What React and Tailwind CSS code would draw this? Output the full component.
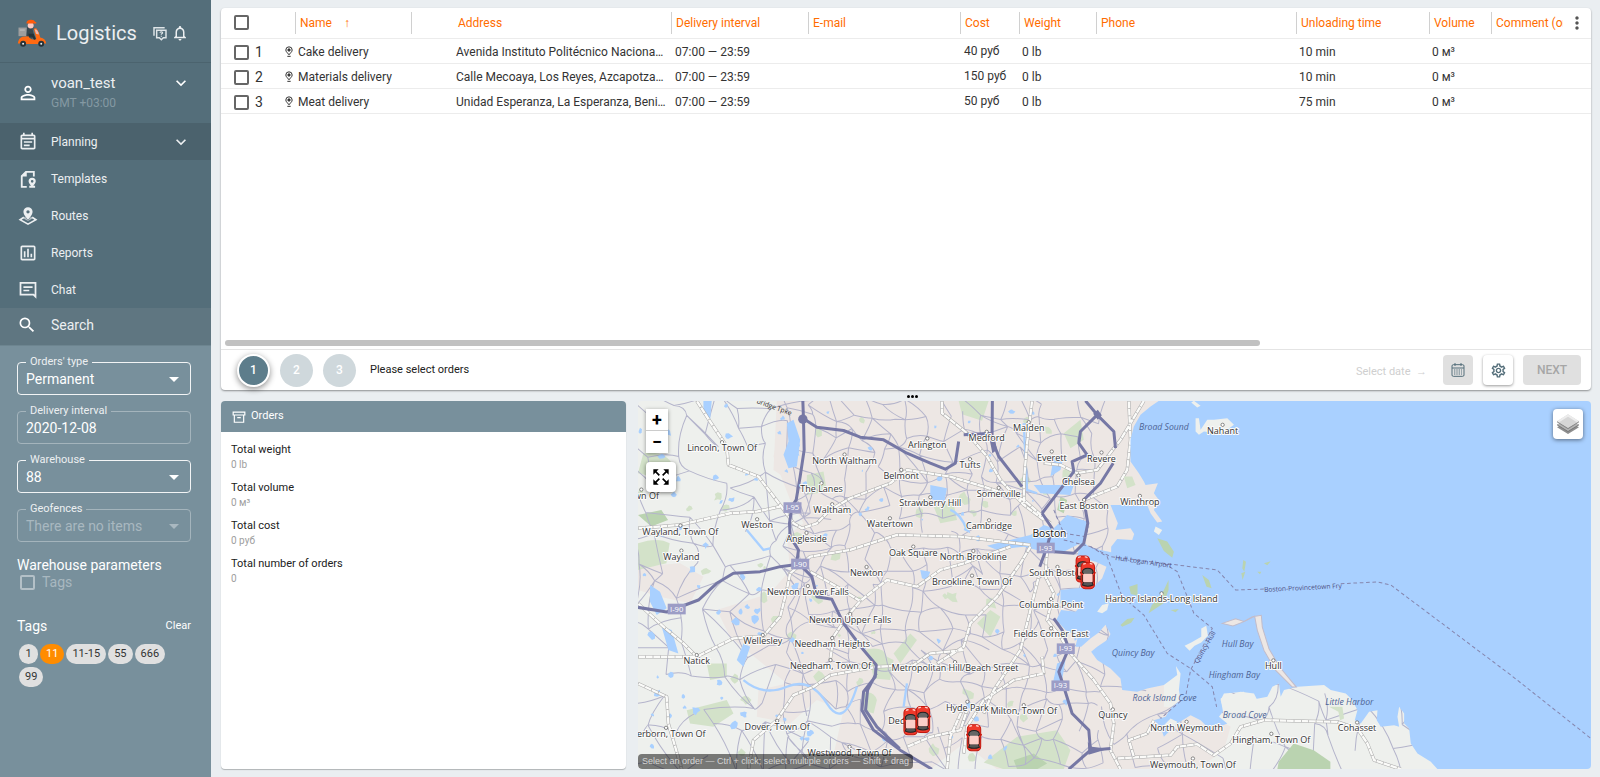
import React from "react";
import {
  MdPersonOutline,
  MdOutlineEventNote,
  MdOutlineAssessment,
  MdSearch,
  MdNotificationsNone,
  MdExpandMore,
  MdArrowDropDown,
  MdMoreVert,
  MdOutlineSettings,
} from "react-icons/md";

/* ---------- icons ---------- */

function ScooterLogo() {
  return (
    <svg viewBox="50 55 90 85" className="h-7 w-[30px] shrink-0" aria-hidden="true">
      <rect x="54" y="81" width="25" height="26" fill="#9e9e9e" />
      <rect x="58" y="87" width="15" height="3" fill="#c4c4c4" />
      <path d="M80 80q10-3 16 3l4 17-4 14H82l-4-10z" fill="#37474f" />
      <path d="M84 100h16l8 18-5 3-8-12H86z" fill="#263238" />
      <path d="M94 83l14 11 3-4-12-11z" fill="#455a64" />
      <circle cx="91" cy="75" r="9" fill="#ffc9c0" />
      <path d="M78 69q0-12 14-12 10 0 13 7l3 1v4H92q-8 0-14 0z" fill="#ff5a0a" />
      <path d="M100 84l8-1 4 6q6 8 8 22 17 3 18 18h-12q-4-6-9-1l-3 3H78l-4-5q-5-5-10 0l-2 3H52q2-16 14-20l18-2 4 6q6 6 16 5l4-3z" fill="#ff6a13" />
      <path d="M103 86q10 0 13 16l-9-2z" fill="#e8b7b0" />
      <circle cx="68" cy="130" r="9" fill="#263238" />
      <circle cx="68" cy="130" r="3" fill="#eceff1" />
      <circle cx="123" cy="130" r="9" fill="#263238" />
      <circle cx="123" cy="130" r="3" fill="#eceff1" />
    </svg>
  );
}

function HelpChatIcon() {
  return (
    <svg viewBox="0 0 24 24" className="size-4" fill="none" stroke="currentColor" strokeWidth="2.200" aria-hidden="true">
      <path d="M3 16V4h16" />
      <path d="M7 8h14v11h-4l-3 3-3-3H7z" />
      <path d="M12 11.800q0-1.500 2-1.500t2 1.500q0 1-2 1.800v1.200" strokeWidth="1.700" />
      <path d="M14 16v1.500" strokeWidth="1.700" />
    </svg>
  );
}

function TemplatesIcon() {
  return (
    <svg viewBox="0 0 24 24" className="size-5" aria-hidden="true">
      <path d="M10.500 21.500H4.500V8.500l5-5H19v5.500" fill="none" stroke="currentColor" strokeWidth="2.200" />
      <path d="M3.500 9l7-6.500V9z" fill="currentColor" />
      <path fill="currentColor" fillRule="evenodd" d="M17 10.500a4.300 4.300 0 0 1 4.300 4.300c0 2.300-2 3.700-2.900 5.200h2.100v2.500h-7V20h2.100c-.9-1.500-2.900-2.900-2.900-5.200A4.300 4.300 0 0 1 17 10.500zm0 2.700a1.600 1.600 0 1 0 0 3.200 1.600 1.600 0 0 0 0-3.200z" />
    </svg>
  );
}

function RoutesIcon() {
  return (
    <svg viewBox="0 0 24 24" className="size-5" aria-hidden="true">
      <path fill="currentColor" fillRule="evenodd" d="M12 1.500a5.500 5.500 0 0 1 5.500 5.500c0 4-5.500 9.500-5.500 9.500S6.500 11 6.500 7A5.500 5.500 0 0 1 12 1.500zm0 3.500a2 2 0 1 0 0 4 2 2 0 0 0 0-4z" />
      <path d="M7 13.500L2.500 16.500 12 21.700l9.500-5.200L17 13.500" fill="none" stroke="currentColor" strokeWidth="1.900" />
      <path d="M5.500 14.500L12 18l6.500-3.500-3-1.500-3.500 4.500-3.500-4.500z" fill="currentColor" opacity=".6" />
    </svg>
  );
}

function ChatIcon() {
  return (
    <svg viewBox="0 0 24 24" className="size-5" fill="none" stroke="currentColor" strokeWidth="2.100" aria-hidden="true">
      <path d="M3 3.500h18V20l-2.500-2.500H3z" />
      <path d="M6.500 8.500h11M6.500 12.500h7" strokeWidth="1.900" />
    </svg>
  );
}

function PinIcon() {
  return (
    <svg viewBox="0 0 24 36" className="h-3 w-2 shrink-0" fill="none" stroke="#333" strokeWidth="3" aria-hidden="true">
      <path d="M12 2.500a9.500 9.500 0 0 1 9.500 9.500c0 6-6 8-7.500 13h-4C8.500 20 2.500 18 2.500 12A9.500 9.500 0 0 1 12 2.500z" />
      <circle cx="12" cy="12" r="3.500" fill="#333" />
      <path d="M7 31h10" />
    </svg>
  );
}

function ArchiveIcon() {
  return (
    <svg viewBox="0 0 24 24" className="size-[14px]" fill="none" stroke="currentColor" strokeWidth="2" aria-hidden="true">
      <path d="M2 3.500h20v5H2z" />
      <path d="M4 8.500V21h16V8.500M9 13h6" />
    </svg>
  );
}

function CalendarIcon() {
  return (
    <svg viewBox="0 0 42 42" className="size-[14px]" fill="none" stroke="#546e7a" strokeWidth="3" aria-hidden="true">
      <rect x="3" y="5" width="36" height="35" rx="4" />
      <path d="M3 15h36M12 0v9M30 0v9" />
      <path d="M9 21h24M9 27h24M9 33h24" strokeDasharray="4 3" />
    </svg>
  );
}

function ExpandIcon() {
  return (
    <svg viewBox="0 0 48 48" className="size-4" aria-hidden="true">
      <path d="M5 5l14 14M43 5L29 19M5 43l14-14M43 43L29 29" fill="none" stroke="#000" strokeWidth="5" />
      <path d="M1 1h16L1 17zM47 1v16L31 1zM1 47V31l16 16zM47 47H31l16-16z" />
    </svg>
  );
}

function LayersIcon() {
  return (
    <svg viewBox="0 0 66 66" className="size-[22px]" aria-hidden="true">
      <path d="M0 43l33 20 33-20-8-5-25 15L8 38z" fill="#8f8f8f" />
      <path d="M0 35l33 20 33-20-8-5-25 15L8 30z" fill="#b5b5b5" />
      <path d="M0 34l33 20 33-20v3L33 57 0 37z" fill="#777" />
      <path d="M0 25l33 20 33-20L33 4z" fill="#d6d6d6" />
      <path d="M0 25L33 4l33 21-6 3-27-17L6 28z" fill="#ececec" />
      <path d="M0 25l33 20 33-20v3L33 49 0 28z" fill="#888" />
    </svg>
  );
}

/* ---------- sidebar ---------- */

const NAV = [
  { label: "Planning", icon: <MdOutlineEventNote className="size-5" />, active: true },
  { label: "Templates", icon: <TemplatesIcon /> },
  { label: "Routes", icon: <RoutesIcon /> },
  { label: "Reports", icon: <MdOutlineAssessment className="size-5" /> },
  { label: "Chat", icon: <ChatIcon /> },
];

function SelectField({ id, label, value, disabled }) {
  return (
    <fieldset
      className={
        "min-w-0 rounded border px-2 " +
        (disabled ? "border-[#a4b4bc] text-[#a9b8c0]" : "border-white/90 text-white")
      }
    >
      <legend className="px-1 text-[11px] leading-3 text-[#eceff1]">
        <label htmlFor={id}>{label}</label>
      </legend>
      <div className="mb-[5px] flex h-[21px] items-center">
        <select
          id={id}
          disabled={disabled}
          className="min-w-0 flex-1 appearance-none bg-transparent text-sm disabled:opacity-100"
        >
          <option>{value}</option>
        </select>
        <MdArrowDropDown className="pointer-events-none -mr-1 size-6 shrink-0" />
      </div>
    </fieldset>
  );
}

function Sidebar() {
  const tags = ["1", "11", "11-15", "55", "666", "99"];
  return (
    <aside className="flex w-[211px] shrink-0 flex-col bg-[#78909c] text-white">
      <div className="bg-[#546e7a]">
        <header className="flex h-[62px] items-center pl-[17px] pr-[22px] pt-[3px]">
          <ScooterLogo />
          <h1 className="ml-[9px] flex-1 text-xl text-[#eceff1]">Logistics</h1>
          <button aria-label="Help" className="text-[#dfe5e8]"><HelpChatIcon /></button>
          <button aria-label="Notifications" className="ml-[3px] text-[#eceff1]">
            <MdNotificationsNone className="size-[18px]" />
          </button>
        </header>
        <div className="flex h-[61px] items-center border-t border-[#4b636e] pl-[17px] pr-5">
          <MdPersonOutline className="size-[22px]" />
          <div className="ml-3 flex-1">
            <p className="text-[15px] leading-5 text-[#eceff1]">voan_test</p>
            <p className="text-xs leading-5 text-[#8499a3]">GMT +03:00</p>
          </div>
          <button aria-label="Account menu" className="mb-5"><MdExpandMore className="size-5" /></button>
        </div>
        <nav>
          {NAV.map((n) => (
            <a
              key={n.label}
              href="#"
              className={
                "flex h-[37px] items-center pl-[18px] pr-5 text-xs text-[#eceff1] " + (n.active ? "bg-[#4b626d]" : "")
              }
            >
              {n.icon}
              <span className="ml-[13px] flex-1">{n.label}</span>
              {n.active && <MdExpandMore className="size-5" />}
            </a>
          ))}
        </nav>
        <div className="flex h-[37px] items-center bg-[#5f7681] pb-[3px] pl-[17px] pr-5">
          <label htmlFor="search" aria-label="Search"><MdSearch className="size-5" /></label>
          <input
            id="search"
            placeholder="Search"
            className="ml-[14px] min-w-0 flex-1 bg-transparent text-sm outline-none placeholder:text-[#eceff1]"
          />
        </div>
      </div>

      <div className="flex flex-col gap-[10px] border-t border-[#6d8590] px-[17px] pr-5 pt-[10px]">
        <SelectField id="otype" label="Orders' type" value="Permanent" />
        <fieldset className="min-w-0 rounded border border-[#a4b4bc] px-2">
          <legend className="px-1 text-[11px] leading-3 text-[#eceff1]">
            <label htmlFor="interval">Delivery interval</label>
          </legend>
          <input
            id="interval"
            defaultValue="2020-12-08"
            className="mb-[5px] block h-[21px] w-full bg-transparent text-sm outline-none"
          />
        </fieldset>
        <SelectField id="warehouse" label="Warehouse" value="88" />
        <SelectField id="geo" label="Geofences" value="There are no items" disabled />
      </div>

      <div className="px-[17px] pr-5 pt-[14px]">
        <h2 className="text-sm leading-[18px]">Warehouse parameters</h2>
        <label className="ml-[3px] flex items-center gap-[7px] text-sm leading-4 text-[#a9b8c0]">
          <input type="checkbox" disabled className="size-[15px] appearance-none rounded-[2px] border-2 border-[#b3c0c7]" />
          Tags
        </label>
        <div className="mt-[26px] flex items-center justify-between">
          <h2 className="text-sm">Tags</h2>
          <button className="text-[11px]">Clear</button>
        </div>
        <div className="mt-2 flex flex-wrap gap-x-[2px] gap-y-[3px] pl-[2px]">
          {tags.map((t) => (
            <button
              key={t}
              className={
                "h-5 min-w-[19px] rounded-full px-[6px] text-[11px] " +
                (t === "11" ? "bg-[#ff8c00] text-white" : "bg-[#e0e0e0] text-[#333]")
              }
            >
              {t}
            </button>
          ))}
        </div>
      </div>
    </aside>
  );
}

/* ---------- orders table ---------- */

const ROWS = [
  { n: 1, name: "Cake delivery", address: "Avenida Instituto Politécnico Nacional, México", cost: "40 руб", time: "10 min" },
  { n: 2, name: "Materials delivery", address: "Calle Mecoaya, Los Reyes, Azcapotzalco", cost: "150 руб", time: "10 min" },
  { n: 3, name: "Meat delivery", address: "Unidad Esperanza, La Esperanza, Benito Juárez", cost: "50 руб", time: "75 min" },
];

const BOX = "block size-[15px] appearance-none rounded-[2px] border-2 border-[#666]";

function Th({ children, pad }) {
  return (
    <th className="p-0 text-left font-normal">
      <div className={"flex h-[22px] items-center overflow-hidden whitespace-nowrap border-l border-[#d0d0d0] " + (pad || "pl-1")}>
        {children}
      </div>
    </th>
  );
}

function OrdersTable() {
  return (
    <table className="w-full table-fixed border-collapse text-xs text-[#333]">
      <colgroup>
        <col className="w-[32px]" />
        <col className="w-[28px]" />
        <col className="w-[130px]" />
        <col className="w-[260px]" />
        <col className="w-[137px]" />
        <col className="w-[152px]" />
        <col className="w-[59px]" />
        <col className="w-[77px]" />
        <col className="w-[200px]" />
        <col className="w-[133px]" />
        <col className="w-[62px]" />
        <col />
        <col className="w-[28px]" />
      </colgroup>
      <thead>
        <tr className="h-[30px] border-b border-[#ececec] text-[#ff6d00]">
          <th className="p-0 pl-[13px]"><input type="checkbox" aria-label="Select all" className={BOX} /></th>
          <th />
          <th className="p-0 pl-[14px] text-left font-normal">
            <div className="flex h-[22px] items-center gap-3 border-l border-[#d0d0d0] pl-1">
              Name <span>↑</span>
            </div>
          </th>
          <Th pad="pl-[46px]">Address</Th>
          <Th>Delivery interval</Th>
          <Th>E-mail</Th>
          <Th>Cost</Th>
          <Th>Weight</Th>
          <Th>Phone</Th>
          <Th>Unloading time</Th>
          <Th>Volume</Th>
          <Th>Comment (order)</Th>
          <th className="p-0">
            <button aria-label="Columns" className="flex w-full justify-center text-[#555]"><MdMoreVert className="size-5" /></button>
          </th>
        </tr>
      </thead>
      <tbody>
        {ROWS.map((r) => (
          <tr key={r.n} className="h-[25px] border-b border-[#ececec]">
            <td className="p-0 pl-[13px] pt-[3px]"><input type="checkbox" aria-label={r.name} className={BOX} /></td>
            <td className="p-0 pl-[2px] pt-[2px] text-sm leading-4">{r.n}</td>
            <td className="p-0 pl-1 pt-[3px]">
              <div className="flex items-center gap-[5px] whitespace-nowrap"><PinIcon />{r.name}</div>
            </td>
            <td className="truncate p-0 pl-[45px] pr-[5px] pt-[2px]">{r.address}</td>
            <td className="p-0 pl-1 pt-[2px]">07:00 — 23:59</td>
            <td />
            <td className="whitespace-nowrap p-0 pl-1">{r.cost}</td>
            <td className="p-0 pl-[3px] pt-[3px]">0 lb</td>
            <td />
            <td className="p-0 pl-[3px] pt-[2px]">{r.time}</td>
            <td className="p-0 pl-[3px] pt-[3px]">0 м³</td>
            <td />
            <td />
          </tr>
        ))}
      </tbody>
    </table>
  );
}

function OrdersCard() {
  return (
    <section className="flex flex-[382] basis-0 flex-col rounded bg-white shadow-[0_1px_2px_rgba(0,0,0,0.4)]">
      <OrdersTable />
      <div className="flex-1" />
      <div className="mb-[3px] px-1"><div className="h-[6px] w-[76%] rounded-full bg-[#c1c1c1]" /></div>
      <footer className="flex h-[41px] items-center border-t border-[#e4e4e4] pl-4 pr-[10px]">
        <ol className="flex items-center gap-[10px] text-center text-xs font-medium text-white">
          <li className="size-[33px] rounded-full border-2 border-white bg-[#5d7d8b] leading-[29px] shadow-[0_2px_6px_rgba(0,0,0,0.45)]">1</li>
          <li className="size-[33px] rounded-full bg-[#cfd8dc] leading-[33px]">2</li>
          <li className="size-[33px] rounded-full bg-[#cfd8dc] leading-[33px]">3</li>
        </ol>
        <p className="ml-[14px] flex-1 text-[11px] text-[#212121]">Please select orders</p>
        <span className="mr-4 pt-1 text-[11px] text-[#cfcfcf]">Select date&nbsp; →</span>
        <button aria-label="Select date" className="grid size-[30px] place-items-center rounded bg-[#e0e0e0]"><CalendarIcon /></button>
        <button aria-label="Settings" className="ml-[10px] grid size-[30px] place-items-center rounded bg-white text-[#546e7a] shadow-[0_1px_3px_rgba(0,0,0,0.4)]">
          <MdOutlineSettings className="size-[17px]" />
        </button>
        <button disabled className="ml-[10px] h-[30px] w-[58px] rounded bg-[#e0e0e0] text-xs font-medium text-[#a6a6a6]">NEXT</button>
      </footer>
    </section>
  );
}

/* ---------- map ---------- */

// Deterministic street mesh, drawn under the water.
function streets(x0, y0, x1, y1, step, keep, seed) {
  let s = seed;
  const rnd = () => {
    s = (s * 16807) % 2147483647;
    return s / 2147483647;
  };
  const pts = [];
  for (let y = y0; y <= y1; y += step) {
    const row = [];
    for (let x = x0; x <= x1; x += step) {
      row.push([Math.round(x + (rnd() - 0.5) * step * 0.9), Math.round(y + (rnd() - 0.5) * step * 0.9)]);
    }
    pts.push(row);
  }
  let d = "";
  const edge = (a, b) => {
    const mx = Math.round((a[0] + b[0]) / 2 + (rnd() - 0.5) * step * 0.4);
    const my = Math.round((a[1] + b[1]) / 2 + (rnd() - 0.5) * step * 0.4);
    d += `M${a[0]} ${a[1]}Q${mx} ${my} ${b[0]} ${b[1]}`;
  };
  pts.forEach((row, j) =>
    row.forEach((p, i) => {
      if (row[i + 1] && rnd() < keep) edge(p, row[i + 1]);
      if (pts[j + 1] && rnd() < keep) edge(p, pts[j + 1][i]);
      if (pts[j + 1] && pts[j + 1][i + 1] && rnd() < keep * 0.25) edge(p, pts[j + 1][i + 1]);
    })
  );
  return d;
}

const RURAL_STREETS = streets(0, 20, 520, 1160, 84, 0.75, 77);
const CITY_STREETS = streets(480, 20, 1440, 1160, 58, 0.8, 1234);
const SOUTH_STREETS = streets(1440, 900, 2500, 1160, 84, 0.7, 991);

function blobs(seed, count, x0, y0, w, h, size) {
  let s = seed;
  const rnd = () => {
    s = (s * 16807) % 2147483647;
    return s / 2147483647;
  };
  let d = "";
  for (let i = 0; i < count; i++) {
    const x = x0 + rnd() * w;
    const y = y0 + rnd() * h;
    const r = size * (0.4 + rnd());
    for (let k = 0; k < 8; k++) {
      const a = (k / 8) * Math.PI * 2;
      const q = r * (0.5 + rnd() * 0.8);
      d += `${k ? "L" : "M"}${Math.round(x + Math.cos(a) * q)} ${Math.round(y + Math.sin(a) * q)}`;
    }
    d += "Z";
  }
  return d;
}

const PONDS = blobs(31, 60, 30, 40, 520, 1080, 9) + blobs(57, 40, 560, 60, 800, 1060, 7);
const GREENS = blobs(411, 30, 560, 60, 800, 1060, 14) + blobs(93, 14, 30, 60, 480, 1060, 14);

const MAJOR = [
  "M200 33L240 95 290 170 295 225 385 260 450 345 490 400 515 415 560 400 600 360 660 325 780 280 830 240 960 260 1060 290 1180 330 1260 400",
  "M24 415L150 405 300 370 380 365 450 350",
  "M24 640L100 710 160 760 200 800 310 745 400 738 450 680 470 600 480 550 540 500 660 480 800 435 990 440 1200 465",
  "M24 800L200 800",
  "M24 880L110 920 115 1000 155 1137",
  "M355 1137L370 1050 440 990 490 915 550 890 600 855 740 830 850 825 900 790 1000 780",
  "M540 545L620 590 690 633 770 570 860 590 930 540 1000 520 1140 470",
  "M690 633L650 680 610 740 600 810",
  "M830 1070L900 1040 990 1020 1010 960",
  "M935 33L935 70 1010 130 1070 200 1110 270 1180 345 1240 390",
  "M1205 33L1190 160 1180 280 1182 345",
  "M1240 220L1290 225 1340 250 1400 240 1470 150 1540 33",
  "M1495 33L1500 150 1490 240 1460 290 1360 330",
  "M1250 480L1245 560 1270 610 1250 690 1290 740 1320 790 1390 870 1440 940 1450 1000 1440 1080 1470 1137",
  "M1000 1090L1010 1010 1060 930 1150 870 1240 850 1235 800",
  "M920 820L1000 770 1020 700 1100 620 1170 520 1200 470",
  "M1060 970L1090 900 1170 780 1200 660 1225 560",
  "M1460 1105L1620 1095 1640 1070 1700 1062 1750 1095 1800 1060 1830 1010 1900 990 2020 993 2120 995 2180 1015 2210 1060 2230 1110 2310 1137",
  "M1510 1100L1495 1050 1550 1030 1570 990",
  "M950 1137L960 1040 1000 950",
];

const MOTORWAY = [
  "M518 33L520 90 522 180 510 260 498 330 485 350 478 400 480 440 505 480 500 515 545 560 560 620 605 628 640 700 700 780 738 825 735 860 700 905 695 960 730 1020 810 1080 905 1137",
  "M738 850L712 900 706 960 740 1010 808 1075",
  "M518 85L560 112 640 122 690 142 760 150 830 190 900 220 945 238 975 220 985 155",
  "M1000 135L1085 130",
  "M24 652L110 666 205 630 260 580 310 550 390 545 450 530 510 522",
  "M1086 33L1085 150 1105 200 1175 290",
  "M1365 33L1400 75 1350 125 1345 160 1370 195 1325 215 1330 245 1235 370",
  "M1400 75L1450 125 1455 175",
  "M1448 220L1410 280 1360 330 1372 400 1360 460 1330 490 1270 485",
  "M1235 370L1265 415 1250 470 1228 530",
  "M1270 685L1295 720 1315 775 1285 845 1300 890 1325 970 1375 1020 1380 1080 1315 1137",
  "M1380 1080L1440 1075",
];

const PLACES = [
  ["Lincoln, Town Of", 276, 184], ["North Waltham", 643, 221], ["The Lanes", 574, 307], ["Waltham", 606, 370],
  ["Belmont", 813, 267], ["Arlington", 891, 173], ["Strawberry Hill", 900, 349], ["Weston", 381, 415],
  ["Wayland, Town Of", 151, 434], ["Angleside", 529, 456], ["Watertown", 779, 412], ["Wayland", 154, 509],
  ["Oak Square", 849, 497], ["Newton", 709, 558], ["Newton Lower Falls", 533, 615], ["Newton Upper Falls", 660, 699],
  ["Needham Heights", 606, 771], ["Wellesley", 398, 762], ["Natick", 200, 822], ["Needham, Town Of", 601, 837],
  ["Metropolitan Hill/Beach Street", 974, 843], ["Dedham", 828, 1001], ["Dover, Town Of", 441, 1019],
  ["Westwood, Town Of", 658, 1097], ["Sherborn, Town Of", 108, 1040], ["Town Of", 34, 326],
  ["North Brookline", 1029, 510], ["Brookline, Town Of", 1025, 584], ["Hyde Park", 1011, 962],
  ["Cambridge", 1076, 418], ["Medford", 1069, 153], ["Tufts", 1019, 235], ["Malden", 1195, 124],
  ["Everett", 1264, 212], ["Revere", 1413, 215], ["Chelsea", 1344, 284], ["Somerville", 1105, 321],
  ["East Boston", 1361, 357], ["Winthrop", 1528, 345], ["South Boston", 1281, 558], ["Columbia Point", 1262, 654],
  ["Fields Corner East", 1262, 742], ["Milton, Town Of", 1180, 972], ["Quincy", 1447, 985],
  ["North Weymouth", 1668, 1022], ["Weymouth, Town Of", 1687, 1132], ["Hull", 1928, 838],
  ["Harbor Islands-Long Island", 1593, 637], ["Nahant", 1776, 132], ["Hingham, Town Of", 1922, 1058],
  ["Cohasset", 2179, 1024],
];

const WATERS = [
  ["Broad Sound", 1600, 120], ["Quincy Bay", 1508, 798], ["Hull Bay", 1821, 772], ["Hingham Bay", 1811, 864],
  ["Rock Island Cove", 1602, 934], ["Broad Cove", 1842, 983], ["Little Harbor", 2156, 946],
];

const SHIELDS = [
  ["I-95", 487, 353], ["I-90", 510, 522], ["I-90", 140, 657], ["I-93", 1246, 474], ["I-93", 1306, 776], ["I-93", 1290, 887],
];

const CARS = [[1357, 537], [1372, 557], [841, 995], [878, 988], [1031, 1043]];

function Car({ x, y }) {
  return (
    <g transform={`translate(${x} ${y})`}>
      <rect x="-24" y="-12" width="48" height="6" rx="3" fill="#c62016" />
      <rect x="-20" y="-39" width="40" height="78" rx="12" fill="#ee3a2c" stroke="#c3170d" strokeWidth="3" />
      <path d="M-14-34q4-3 8-2M14-34q-4-3-8-2" stroke="#ffd2cc" strokeWidth="4" fill="none" />
      <path d="M-16-10q0-12 16-12t16 12l-4 6h-24z" fill="#666" stroke="#222" strokeWidth="3" />
      <path d="M-13 20h26l3 8q-16 7-32 0z" fill="#555" stroke="#222" strokeWidth="3" />
      <path d="M-16-2v22M16-2v22" stroke="#5a2a26" strokeWidth="3" />
      <rect x="-14" y="-6" width="28" height="26" rx="3" fill="#fccfc9" />
    </g>
  );
}

function MapDrawing() {
  return (
    <svg
      viewBox="24 33 2856 1104"
      preserveAspectRatio="xMidYMid slice"
      className="block h-full w-full"
      role="img"
      aria-label="Map of Boston"
    >
      <rect x="-2000" y="-2000" width="7000" height="5000" fill="#eef0ed" />
      <path fill="#ede7e4" d="M470 33H1600V1137H1100L1000 1060 900 1137H600L640 960 560 930 480 1000 380 980 385 900 470 880 300 740 260 660 420 610 480 540 470 440 520 400 480 330 430 200z" />
      <path fill="#ede7e4" d="M24 530L150 520 220 560 180 640 90 620 24 600zM440 33H520V300L430 240zM1600 950L1720 960 1800 1010 1780 1080 1700 1137H1500z" />
      <path fill="#d3e2c9" d="M40 190q70-10 90 40t-106 20zM24 460q60-20 95 0l-10 60-85 20zM530 255l50-10 10 60-60 10zM700 780q60-15 70 20l20 10-10 60-50-5-10-50zM790 790l50-60 20 20-50 70zM170 960l120-30 20 40-60 40-70-10zM230 820l60 0 0 40-50 10zM700 910q30-10 40 20l-10 40-30-10zM985 33h90l-20 60-60-20zM1300 130l50-40 10 60-40 25zM1040 700l40-40 30 20-30 60zM910 350l60-10 10 50-50 10zM1160 1040l120-20 40 60-20 57h-180l-60-20z" />
      <path fill="#bad3b0" d="M1150 1110l60-20 40 30-30 17h-60zM1290 320l20 10-10 40-20-10zM24 375l70-15 20 30-50 20z" />
      <path fill="#d3e2c9" d={GREENS} />
      <path d={RURAL_STREETS} fill="none" stroke="#b4b4cb" strokeWidth="3" />
      <path d={CITY_STREETS} fill="none" stroke="#b4b4cb" strokeWidth="3" />
      <path d={SOUTH_STREETS} fill="none" stroke="#b4b4cb" strokeWidth="3" />
      <path d={PONDS} fill="#a9d0ff" />
      <path
        fill="#a9d0ff"
        d="M470 100l20-10 20 60-10 80-25 5-15-40 15-40zM220 33h25l-5 60-20-20zM60 585l30 20 20 50-30 20-20-40zM95 710l30 10 20 70-30-10zM340 760l20 10-20 60-20-20zM900 285l50 10-10 50-40-20zM870 540l30 5-10 25-15-5zM1210 285h120l-10 30-90-5zM1070 467l130-32 40-30 30 10 40-40 60 20-10 60-60 30-60 0-60-15-80 10zM1270 200l30 0-10 40-30 20zM1010 400l-10 20 20 10zM1280 820l25-10-10 60-30 20z"
      />
      <path d="M340 870q60 50 130 20t120 50 90-50M820 950l10-70M1180 100l10 200 30 10M960 360q30 10 50 60M350 420l50 60 20-5" fill="none" stroke="#a9d0ff" strokeWidth="7" />

      <g fill="none" strokeLinejoin="round">
        <path d={MAJOR.join("")} stroke="#aaaaaa" strokeWidth="10" />
        <path d={MAJOR.join("")} stroke="#fbfbf9" strokeWidth="7" />
        <path d={MAJOR.join("")} stroke="#aaaaaa" strokeWidth="7" strokeDasharray="2 20" />
      </g>

      <path
        fill="#a9d0ff"
        d="M1585 33L1560 50 1530 75 1510 110 1500 150 1500 215 1525 250 1540 275 1545 285 1582 280 1570 310 1585 330 1570 360 1595 395 1580 398 1560 370 1550 345 1500 345 1440 345 1450 370 1462 400 1455 420 1500 415 1511 432 1505 450 1460 447 1442 470 1442 487 1410 480 1375 470 1352 450 1340 500 1395 515 1428 530 1415 565 1390 590 1340 595 1290 600 1290 640 1352 648 1335 665 1292 660 1278 690 1305 720 1342 740 1335 770 1352 770 1380 745 1405 727 1425 704 1440 732 1430 750 1400 770 1382 785 1400 810 1440 835 1470 865 1475 900 1520 905 1550 895 1600 885 1640 855 1636 828 1650 850 1645 900 1650 930 1620 955 1605 980 1570 990 1590 1010 1600 1040 1640 1000 1680 975 1710 990 1740 1020 1790 1000 1765 980 1780 960 1770 930 1780 910 1840 905 1860 930 1910 920 1925 890 1945 880 1950 920 1960 900 2000 890 2080 885 2100 900 2145 910 2165 930 2180 960 2172 990 2190 1000 2215 965 2240 960 2238 990 2250 1010 2290 1005 2305 1010 2300 980 2305 950 2320 970 2320 1000 2335 1015 2340 1060 2360 1090 2400 1115 2420 1137 2420 3000H5000V-2000H1600z"
      />
      <g fill="#eef0ed">
        <path d="M1695 85l10 0 5 35 20-30 20 0 40-5 20 20-20 15-20 10-50-5-15 10-10-10zM1690 33l20 15-10 5-18-15zM1712 740l0-25 15-8 5 30-20 20-20 10-15 15-15-15 20-10zM1400 665l15-20 20-5-5 20-15 10zM1575 410l20 10-10 15-15-10z" />
        <path d="M1770 925l60-20 40 5 20 40-60 30-50 0zM1600 1005l20-20 20 10-10 20z" />
      </g>
      <path fill="#ede7e4" stroke="#c0bccb" strokeWidth="3" d="M1775 700l40-14 25 8 25-14 27-4 3 35 20 65 32 55 50 60-12 0-50-50-35-60-20-60-8-42-30 15-35 14z" />
      <path fill="#bad3b0" d="M1580 445l30 10 20 30-5 18-25-20zM1715 555l20 15 8 25-15-5zM1496 590l25-8 0 35-20-5zM1600 600l14-30 0 30-15 40-45 30 10-25 20-20zM1470 705l20-18 22-4-10 15-27 12zM1838 510l8 5-5 30-6-10zM1832 550l12-5-8 25zM1900 520l20-6-10 12zM1880 545l12 0-4 8zM1620 660l25-3-10 10z" />
      <path fill="#bad3b0" d="M1944 1115l45-55 60 20 50 35v22H1940z" />
      <path fill="#d3e2c9" d="M2095 950l40 0 5 35-12 5-5-25zM1480 260l25 0 10 25-25 10z" />
      <g fill="none" stroke="#8585ad" strokeWidth="3" strokeDasharray="11 8">
        <path d="M1300 450L1380 470 1440 500 1600 520 1760 540 1815 600 1905 597M2130 581L2240 576 2280 585 2420 690 2640 855 2880 1045" />
        <path d="M1380 470L1430 500 1475 620 1540 675 1610 790 1680 835 1745 890 1758 950M1600 520L1640 545 1690 670 1745 715 1680 840 1665 920 1590 985" />
        <path d="M1270 360L1300 430 1365 440 1375 410" />
      </g>

      <g fill="none" stroke="#7678a5" strokeWidth="9" strokeLinejoin="round">
        <path d={MOTORWAY.join("")} />
      </g>
      <circle cx="518" cy="88" r="14" fill="#7678a5" />
      <path d="M1078 150h16l6 30-14 10zM1388 72l14-12 12 16-12 14zM1372 1055l12 15 50 6-60 18z" fill="#7678a5" />

      <g fontFamily="'Open Sans', 'Noto Sans', sans-serif" textAnchor="middle">
        {PLACES.map(([t, x, y]) => (
          <circle key={t} cx={x} cy={y - 27} r="5" fill="#fff" stroke="#555" strokeWidth="2" />
        ))}
        <g fontSize="27" fill="#333" stroke="#fbfbfb" strokeWidth="6" strokeLinejoin="round" paintOrder="stroke">
          {PLACES.map(([t, x, y]) => (
            <text key={t} x={x} y={y}>{t}</text>
          ))}
          <text x="1257" y="442" fontSize="31" fill="#111">Boston</text>
        </g>
        <g fontSize="26" fontStyle="italic" fill="#4d6394">
          {WATERS.map(([t, x, y]) => (
            <text key={t} x={x} y={y}>{t}</text>
          ))}
        </g>
        <g fontSize="20" fill="#4d4d80">
          <text transform="translate(1538 522) rotate(8)">Hull-Logan Airport</text>
          <text transform="translate(2017 600) rotate(-3)">Boston-Provincetown Fry</text>
          <text transform="translate(1729 775) rotate(-60)">Quincy-Hull</text>
          <text transform="translate(430 58) rotate(20)" fill="#333">bridge Tpke</text>
        </g>
        {SHIELDS.map(([t, x, y]) => (
          <g key={t + x + y}>
            <rect x={x - 27} y={y - 16} width="54" height="32" fill="#9c9dc6" />
            <text x={x} y={y + 8} fontSize="23" fill="#fff">{t}</text>
          </g>
        ))}
      </g>
      {CARS.map(([x, y]) => (
        <Car key={x} x={x} y={y} />
      ))}
    </svg>
  );
}

function MapPanel() {
  return (
    <section className="relative min-w-0 flex-1 overflow-hidden rounded">
      <div className="absolute inset-0"><MapDrawing /></div>
      <div className="absolute left-2 top-2 flex flex-col items-start gap-[9px]">
        <div className="flex w-[22px] flex-col bg-white text-lg font-bold text-black shadow-[0_1px_4px_rgba(0,0,0,0.4)]">
          <button aria-label="Zoom in" className="h-[22px] border-b border-[#ccc] leading-5">+</button>
          <button aria-label="Zoom out" className="h-[22px] leading-5">−</button>
        </div>
        <button aria-label="Full screen" className="grid size-[30px] place-items-center rounded bg-white shadow-[0_1px_4px_rgba(0,0,0,0.5)]">
          <ExpandIcon />
        </button>
      </div>
      <button aria-label="Layers" className="absolute right-2 top-2 grid size-[30px] place-items-center rounded bg-white shadow-[0_1px_4px_rgba(0,0,0,0.5)]">
        <LayersIcon />
      </button>
      <p className="absolute bottom-0 left-0 rounded-sm bg-black/50 px-1 font-['Liberation_Sans',sans-serif] text-[9px] leading-[15px] text-[#d5d5d5]">
        Select an order — Ctrl + click; select multiple orders — Shift + drag
      </p>
    </section>
  );
}

/* ---------- summary ---------- */

const TOTALS = [
  ["Total weight", "0 lb"],
  ["Total volume", "0 м³"],
  ["Total cost", "0 руб"],
  ["Total number of orders", "0"],
];

function Summary() {
  return (
    <section className="w-[405px] shrink-0 rounded bg-white shadow-[0_1px_1px_rgba(0,0,0,0.25)]">
      <h2 className="flex h-[31px] items-center gap-[5px] rounded-t bg-[#78909c] pl-[11px] text-[11px] text-white">
        <ArchiveIcon /> Orders
      </h2>
      <dl className="flex flex-col gap-2 px-[10px] pt-[10px]">
        {TOTALS.map(([k, v]) => (
          <div key={k}>
            <dt className="text-[11px] leading-4 text-[#212121]">{k}</dt>
            <dd className="text-[10px] leading-[14px] text-[#9e9e9e]">{v}</dd>
          </div>
        ))}
      </dl>
    </section>
  );
}

export default function App() {
  return (
    <div className="flex min-h-screen bg-[#eaeef1] font-[Roboto,sans-serif]">
      <Sidebar />
      <main className="flex min-w-0 flex-1 flex-col py-2 pl-[10px] pr-[9px]">
        <OrdersCard />
        <div className="flex h-[11px] items-center justify-center gap-[1px] pl-3 pt-[2px]" role="separator">
          <i className="size-[3px] rounded-full bg-black" />
          <i className="size-[3px] rounded-full bg-black" />
          <i className="size-[3px] rounded-full bg-black" />
        </div>
        <div className="flex flex-[368] basis-0 gap-3">
          <Summary />
          <MapPanel />
        </div>
      </main>
    </div>
  );
}
